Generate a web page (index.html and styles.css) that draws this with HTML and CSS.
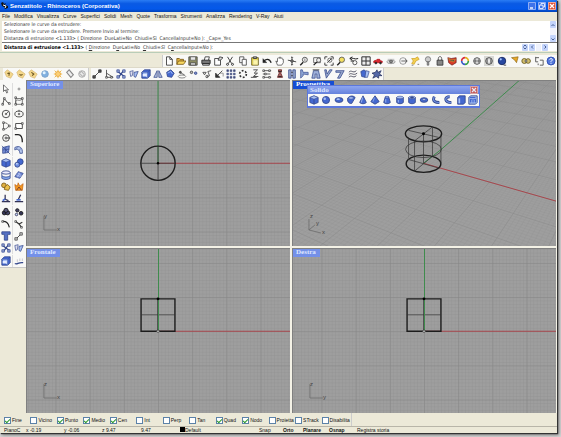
FILE: index.html
```html
<!DOCTYPE html>
<html lang="it">
<head>
<meta charset="utf-8">
<title>Senzatitolo - Rhinoceros (Corporativa)</title>
<link rel="stylesheet" href="styles.css">
</head>
<body>
<div class="window">
  <header class="titlebar">
    <svg class="app-icon" viewBox="0 0 8 8"><path d="M0 1L2 0L3 2L5 1L4 3L7 4L7 6L4 7L3 5L1 4Z" fill="#111"/><path d="M2 3L5 4L4 6" stroke="#fff" fill="none"/></svg>
    <h1>Senzatitolo - Rhinoceros (Corporativa)</h1>
    <div class="caption">
      <button aria-label="Riduci"><svg viewBox="0 0 8 8"><path d="M2 6H5" stroke="#fff" stroke-width="1.4"/></svg></button>
      <button aria-label="Ripristina"><svg viewBox="0 0 8 8"><path d="M3 3V1.500H6.500V5H5M1.500 3.200H5V6.500H1.500Z" stroke="#fff" stroke-width=".8" fill="none"/></svg></button>
      <button class="close" aria-label="Chiudi"><svg viewBox="0 0 8 8"><path d="M2 2L6 6M6 2L2 6" stroke="#fff" stroke-width="1.300"/></svg></button>
    </div>
  </header>
  <nav class="menu">
    <a href="#">File</a><a href="#">Modifica</a><a href="#">Visualizza</a><a href="#">Curve</a><a href="#">Superfici</a><a href="#">Solidi</a><a href="#">Mesh</a><a href="#">Quote</a><a href="#">Trasforma</a><a href="#">Strumenti</a><a href="#">Analizza</a><a href="#">Rendering</a><a href="#">V-Ray</a><a href="#">Aiuti</a>
  </nav>
  <section class="command">
    <div class="history">
      <div class="lines">
        <p>Selezionare le curve da estrudere:</p>
        <p>Selezionare le curve da estrudere. Premere Invio al termine:</p>
        <p>Distanza di estrusione &lt;1.133&gt; ( Direzione&nbsp; DueLati=No&nbsp; Chiudi=Sì&nbsp; CancellaInput=No ): _Cap=_Yes</p>
      </div>
      <div class="scroll">
        <button aria-label="Su"><svg viewBox="0 0 6 6"><path d="M1.500 4L3 2.500L4.500 4"/></svg></button>
        <button aria-label="Giù"><svg viewBox="0 0 6 6"><path d="M1.500 2.500L3 4L4.500 2.500"/></svg></button>
      </div>
    </div>
    <div class="prompt">
      <label for="cmd"><b>Distanza di estrusione &lt;1.133&gt;</b> ( <u>D</u>irezione&nbsp; D<u>u</u>eLati=<i>No</i>&nbsp; <u>C</u>hiudi=<i>Sì</i>&nbsp; C<u>a</u>ncellaInput=<i>No</i> ):</label>
      <input id="cmd" type="text">
      <div class="spin">
        <button aria-label="Cronologia"><svg viewBox="0 0 6 6"><path d="M1.500 2.500L3 1L4.500 2.500M1.500 3.500L3 5L4.500 3.500"/></svg></button>
        <button aria-label="Sinistra"><svg viewBox="0 0 6 6"><path d="M4 1.500L2.500 3L4 4.500"/></svg></button>
        <span></span>
        <button aria-label="Destra"><svg viewBox="0 0 6 6"><path d="M2.500 1.500L4 3L2.500 4.500"/></svg></button>
      </div>
    </div>
  </section>
  <div class="band band-main">
    <div class="tools standard" data-icons="new open save print props cut copy paste undo pan move3d zoom zoomwin zoomext zoomsel undoview grid4 car hide cplane points bulb lock render wheel sphereg sphereon sphereb spot gears dims help"></div>
  </div>
  <div class="band band-second">
    <div class="tools filters" data-icons="tagA tagB tagC ball sun slot slotb"></div>
    <div class="tools transform" data-icons="link tri nodes flow cubeb mirror boxb orbit dots rotate arrow array polar twist cage bone frame shear taper bendl bendr waves wrap splat"></div>
  </div>
  <main class="work">
    <aside class="side">
      <div class="tools palette" data-icons="cursor point poly ctrl circle ellipse arc rect ellc fillet patch surf box spheres tube plane bool explode trim split group ungroup curve chain text scale nodes flow cubeb analyze"></div>
    </aside>
    <div class="views">
      <section class="view">
        <svg class="scene" viewBox="0 0 264 166" preserveAspectRatio="xMidYMid slice">
          <defs>
            <pattern id="minor" width="3.430" height="3.430" patternUnits="userSpaceOnUse" x="131.500" y="83"><path d="M0 0H3.430M0 0V3.430" stroke="#919191" stroke-width=".7" fill="none"/></pattern>
            <pattern id="major" width="34.300" height="34.300" patternUnits="userSpaceOnUse" x="131.500" y="83"><path d="M0 0H34.300M0 0V34.300" stroke="#858585" stroke-width="1" fill="none"/></pattern>
          </defs>
          <path d="M0 0H264V166H0Z" fill="url(#minor)"/><path d="M0 0H264V166H0Z" fill="url(#major)"/>
          <path class="green" d="M131.500 0V83"/><path class="red" d="M131.500 83H264"/>
          <circle class="bold" cx="131.500" cy="83" r="17.200"/><path class="thin" d="M114 83H149M131.500 66V100"/><circle cx="131.500" cy="83" r="1.200"/>
          <g class="axis"><path d="M17 136V150H30"/><text x="17" y="138">y</text><text x="30" y="151">x</text></g>
        </svg>
        <h2>Superiore</h2>
      </section>
      <section class="view">
        <svg class="scene" viewBox="0 0 264 166" preserveAspectRatio="xMidYMid slice">
          <path id="floor-minor" class="floor"/><path id="floor-major" class="floor major"/>
          <path class="green" d="M131 83L149 69L227 0"/><path class="red" d="M131 83L264 121"/>
          <ellipse class="bold" cx="131" cy="53.500" rx="18.200" ry="8"/><ellipse class="thin" cx="131" cy="69" rx="18" ry="8.300"/><ellipse class="bold" cx="131" cy="83.500" rx="17.400" ry="8.700"/>
          <path class="thin" d="M116 50L146 57M122 60.500L140 46.500M131 53V83M116 57V78M122 60V91M140 47V76M148.500 54V83M115 79L147 88M122 91L140 76"/><circle cx="131" cy="53.500" r="1.500"/>
          <g class="axis"><path d="M16 139V150L28 153M16 150L22 145"/><text x="17" y="138">z</text><text x="23" y="145">y</text><text x="29" y="154">x</text></g>
        </svg>
        <h2 class="active">Prospettiva</h2>
      </section>
      <section class="view">
        <svg class="scene" viewBox="0 0 264 166" preserveAspectRatio="xMidYMid slice">
          <path d="M0 0H264V166H0Z" fill="url(#minor)"/><path d="M0 0H264V166H0Z" fill="url(#major)"/>
          <path class="red" d="M131.500 83H264"/>
          <path class="bold" d="M114.500 50.500H148.500V83H114.500Z"/><path class="thin" d="M114.500 66.500H148.500M131 50V83"/>
          <path class="green" d="M132 0V83"/><circle cx="131.500" cy="50.500" r="1.400"/><circle class="origin" cx="131.500" cy="83" r="1.200"/>
          <g class="axis"><path d="M17 136V150H30"/><text x="17" y="138">z</text><text x="30" y="151">x</text></g>
        </svg>
        <h2>Frontale</h2>
      </section>
      <section class="view">
        <svg class="scene" viewBox="0 0 264 166" preserveAspectRatio="xMidYMid slice">
          <path d="M0 0H264V166H0Z" fill="url(#minor)"/><path d="M0 0H264V166H0Z" fill="url(#major)"/>
          <path class="red" d="M131.500 83H264"/>
          <path class="bold" d="M114.500 50.500H148.500V83H114.500Z"/><path class="thin" d="M114.500 66.500H148.500M131 50V83"/>
          <path class="green" d="M132 0V83"/><circle cx="131.500" cy="50.500" r="1.400"/><circle class="origin" cx="131.500" cy="83" r="1.200"/>
          <g class="axis"><path d="M17 136V150H30"/><text x="17" y="138">z</text><text x="30" y="151">y</text></g>
        </svg>
        <h2>Destra</h2>
      </section>
      <div class="floating">
        <div class="floating-title"><span>Solido</span><button class="close" aria-label="Chiudi"><svg viewBox="0 0 8 8"><path d="M2 2L6 6M6 2L2 6" stroke="#fff" stroke-width="1.200"/></svg></button></div>
        <div class="tools" data-icons="box sphere ellipsoid parab cone pyramid conet cylinder tubes torus pipe pipeb extr text3d"></div>
      </div>
    </div>
  </main>
  <div class="osnap">
    <label><input type="checkbox" checked>Fine</label><label><input type="checkbox">Vicino</label><label><input type="checkbox" checked>Punto</label><label><input type="checkbox" checked>Medio</label><label><input type="checkbox" checked>Cen</label><label><input type="checkbox">Int</label><label><input type="checkbox">Perp</label><label><input type="checkbox">Tan</label><label><input type="checkbox" checked>Quad</label><label><input type="checkbox" checked>Nodo</label><label><input type="checkbox">Proietta</label><label><input type="checkbox">STrack</label><label><input type="checkbox">Disabilita</label>
  </div>
  <footer class="status">
    <span>PianoC</span><span>x -0.19</span><span>y -0.06</span><span>z 9.47</span><span>9.47</span><span class="layer">Default</span><span>Snap</span><b>Orto</b><b>Planare</b><b>Osnap</b><span>Registra storia</span>
  </footer>
</div>
<script src="app.js"></script>
</body>
</html>
```
FILE: styles.css
```css
* { box-sizing: border-box; margin: 0; padding: 0; }
body {
  min-height: 100vh;
  display: flex;
  padding: 0 4px 4px 0;
  background: #d4d4d4;
  font: 5px/7px "Liberation Sans", sans-serif;
  color: #111;
}
button { border: 0; background: none; display: block; min-width: 0; }
svg { display: block; }
a { color: inherit; text-decoration: none; }
.window {
  flex: 1;
  min-width: 0;
  display: flex;
  flex-direction: column;
  background: #ece9d8;
  box-shadow: 1px 1px 1px #333, 2px 2px 3px #777;
}
.titlebar {
  height: 12px;
  display: flex;
  align-items: center;
  gap: 1px;
  padding: 0 1px;
  background: linear-gradient(#2a7cf4, #0a5ae4 30%, #0458ea 75%, #0344b8);
  color: #fff;
}
.titlebar h1 { flex: 1; font-size: 6px; font-weight: bold; }
.app-icon { width: 8px; height: 8px; }
.caption { display: flex; gap: 2px; }
.caption button, .floating .close { width: 8px; height: 8px; border-radius: 1px; background: #3f73ea; box-shadow: inset 0 0 0 1px #8faef5; }
.caption .close, .floating .close { background: #dc5038; box-shadow: inset 0 0 0 1px #f0a898; }
.menu { height: 9px; display: flex; gap: 4px; padding: 0 2px; line-height: 8px; }
.command { background: #fff; border-left: 2px solid #ece9d8; font-family: "DejaVu Sans Condensed", "DejaVu Sans", sans-serif; }
.history { display: flex; height: 22px; justify-content: space-between; border-bottom: 1px solid #777; }
.lines { padding-left: 2px; color: #333; white-space: nowrap; }
.scroll { width: 6px; margin-right: 1px; display: flex; flex-direction: column; justify-content: space-between; background: #f2f3fb; }
.scroll button, .spin button { width: 6px; height: 7px; background: #c4d4fb; border-radius: 1px; }
.scroll path, .spin path { stroke: #465f94; stroke-width: 1; fill: none; }
.prompt { display: flex; height: 8px; align-items: center; }
.prompt label { padding-left: 2px; white-space: nowrap; color: #333; }
.prompt label b { color: #000; }
.prompt i { font-style: italic; }
.prompt input { flex: 1; min-width: 0; height: 7px; border: 0; font: inherit; outline: 0; }
.spin { display: flex; gap: 1px; padding-right: 9px; }
.spin span { width: 5px; background: #eef1fc; }
.band { display: flex; flex: none; }
.band-main { height: 15px; margin-top: 1px; padding-top: 2px; border-top: 1px solid #b9cdb8; justify-content: flex-end; }
.band-second { height: 13px; border-top: 1px solid #ddd9c8; }
.tools { display: grid; grid-auto-flow: column; grid-auto-columns: 1fr; background: #f9f9f7; }
.tools button { height: 12px; display: flex; justify-content: center; align-items: center; }
.tools svg { width: 10px; height: 10px; flex: none; }
.standard { width: 71%; border-left: 1px solid #ccc; }
.filters { width: 86px; margin-left: 3px; border-right: 1px solid #ccc; }
.transform { width: 293px; margin-left: 2px; border-right: 1px solid #ccc; }
.work { flex: 1; display: flex; min-height: 0; }
.side { width: 26px; flex: none; }
.palette { grid-auto-flow: row; grid-template-columns: 1fr 1fr; grid-auto-rows: 1fr; padding: 3px 1px 0 0; height: 188px; border-bottom: 1px solid #c8c8c8; }
.palette button:nth-child(odd) { border-right: 1px solid #ddd; }
.views {
  flex: 1;
  position: relative;
  display: grid;
  grid-template: 1fr 1fr / 1fr 1fr;
  gap: 2px;
  padding-right: 1px;
  background: #f4f2e6;
}
.view { position: relative; overflow: hidden; min-width: 0; min-height: 0; background: #9e9e9e; border: solid #808080; border-width: 1px 0 0 1px; }
.scene { position: absolute; inset: 0; width: 100%; height: 100%; }
.view h2 { position: absolute; top: 0; left: 0; padding: 0 4px 1px 3px; background: #7490e8; color: #dfe7ff; font: bold 7px/7px "Liberation Serif", serif; }
.view h2.active { background: #164ed4; color: #fff; }
.bold, .thin, .green, .red, .floor, .axis path { fill: none; }
.bold { stroke: #1c1c1c; stroke-width: 1.4px; }
.thin { stroke: #333; stroke-width: 0.7px; }
.green { stroke: #3e8b4c; stroke-width: 1px; }
.red { stroke: #a8464c; stroke-width: 1px; }
.origin { fill: #ddd; stroke: #222; stroke-width: 0.6px; }
.floor { stroke: #939393; stroke-width: 0.3px; }
.floor.major { stroke: #8c8c8c; stroke-width: 0.6px; }
.axis path { stroke: #6c6c6c; stroke-width: 0.8px; }
.axis text { fill: #444; font-size: 6px; }
.floating {
  position: absolute;
  top: 5px;
  left: 281px;
  width: 173px;
  border: solid #5c78dc;
  border-width: 1px 1px 2px;
  background: #f9f9f9;
}
.floating-title { height: 8px; display: flex; justify-content: space-between; align-items: center; padding: 0 1px 0 2px; background: linear-gradient(#8ea6f0, #6582dc); color: #dfe7ff; font: bold 7px/7px "Liberation Serif", serif; }
.floating .close { opacity: 0.8; }
.osnap { height: 13px; width: 352px; display: grid; grid-template-columns: repeat(13, 1fr); padding: 1px 3px 0 4px; border-right: 1px solid #ccc; }
.osnap label { display: flex; align-items: center; gap: 1px; white-space: nowrap; min-width: 0; }
.osnap input { appearance: none; flex: none; width: 7px; height: 7px; border: 1px solid #5c82a8; background: #fff; }
.osnap input:checked::after { content: ""; display: block; width: 4px; height: 2px; margin-top: 1px; border: solid #2c9a2c; border-width: 0 0 1px 1px; transform: rotate(-45deg); }
.status { height: 7px; display: grid; grid-template-columns: 22px 38px 38px 39px 39px 79px 24px 20px 26px 28px 1fr; padding-left: 4px; line-height: 6px; border-top: 1px solid #b8b5a8; white-space: nowrap; }
.layer::before { content: ""; display: inline-block; width: 5px; height: 5px; background: #000; vertical-align: top; }
```
FILE: app.js
```js
// Icon drawings on a 12 x 12 grid.
const p = (d, stroke = '#333', fill = 'none', w = 1) =>
  `<path d="${d}" stroke="${stroke}" fill="${fill}" stroke-width="${w}"/>`;
const c = (x, y, r, stroke = '#333', fill = 'none', w = 1) =>
  `<circle cx="${x}" cy="${y}" r="${r}" stroke="${stroke}" fill="${fill}" stroke-width="${w}"/>`;
const e = (x, y, rx, ry, stroke = '#333', fill = 'none', w = 1) =>
  `<ellipse cx="${x}" cy="${y}" rx="${rx}" ry="${ry}" stroke="${stroke}" fill="${fill}" stroke-width="${w}"/>`;
const navy = '#33478c', blue = '#4468d0', pale = '#a8c0f4', gold = '#e0b040', brown = '#7a5a18';
const tag = mark => p('M1 4L4 1L11 6L8 11L3 9Z', '#d4b470', '#f4d88c', .8) + p(mark, '#6a5420', 'none', 1.3);
const lens = 'M5 7.5L1.5 11';
const square = (x, y) => p(`M${x} ${y}h2v2h-2Z`, '#333', '#fff', .8);

const icons = {
  new: p('M3 1H7L10 4V11H3Z', '#333', '#fff') + p('M7 1V4H10'),
  open: p('M1 10V3H4L5 4H9V6', brown, gold) + p('M1 10L3 6H12L9 10Z', brown, '#f8d860'),
  save: p('M1 1H11V11H1Z', '#444', '#8c8c60') + p('M3 1H9V5H3Z', '#555', '#e8e8e8', .7) + p('M3 8H9V11H3Z', '#333', '#ccc', .7),
  print: p('M4 5L5 1H10L9 5', '#333', '#fff') + p('M1 5H11V9H1Z', '#222', '#777') + p('M2 9H10V11H2Z', '#222', '#ccc'),
  props: p('M2 3H9V11H2Z', '#333', '#fff') + p('M6 5L8 1L12 2L9 5Z', '#333', '#ddd'),
  cut: p('M3 1L8 9M9 1L4 9', '#222') + c(3, 10, 1.2, '#222') + c(9, 10, 1.2, '#222'),
  copy: p('M2 1H7V8H2Z', '#444', '#fff') + p('M5 4H10V11H5Z', '#444', '#fff'),
  paste: p('M2 2H10V11H2Z', '#665a20', '#f0dc50') + p('M4 1H8V3H4Z', '#333', '#bbb') + p('M4 5H9V10H4Z', '#ddb', '#fff7a8', .6),
  undo: p('M2 7C4 3 9 3 11 8', '#222', 'none', 1.6) + p('M1 3V8H6Z', '#222', '#222', .3),
  pan: p('M3 11L1 6L3 7V3L4 2L5 3L6 1L7 3L8 2L9 4L10 4V8L8 11Z', '#333', '#fff', .8),
  move3d: p('M6 1V11M1 5L11 7M5 2L6 1L7 2M5 10L6 11L7 10', '#333') + c(6, 6, 1.5, '#333', '#999'),
  zoom: c(7, 4.5, 3, '#444', '#eee') + p(lens, '#222', 'none', 1.6) + p('M7 3V6', '#777'),
  zoomwin: p('M2 2H10V8H2Z', '#555') + c(8, 5, 2.5, '#555', '#eee') + p('M6 7L2 11', '#222', 'none', 1.5),
  zoomext: p('M1 4V1H4M8 1H11V4M11 8V11H8M4 11H1V8M4 8L9 3', '#222') + c(7, 5, 2.5, '#555'),
  zoomsel: c(7, 4.5, 3.2, '#555', '#f4e060') + p(lens, '#222', 'none', 1.6),
  undoview: p('M1 3C4 1 7 5 11 3M2 6H6M1 3L4 1M1 3L4 5', '#222', 'none', 1.2) + c(7, 8, 2.5, '#444'),
  grid4: p('M1 1H11V11H1ZM6 1V11M1 6H11', '#333', '#eee', 1.2),
  car: p('M1 8V6L4 5L5 4H8L9 6L11 6V8Z', '#b81820', '#d82830') + c(3.5, 8.5, 1, '#222', '#222') + c(9, 8.5, 1, '#222', '#222'),
  hide: e(6, 7, 5, 2.2, '#999', '#ddd') + c(6, 6.5, 1.8, '#555', '#888') + p('M2 4L10 4', '#bbb'),
  cplane: c(6, 6, 4, '#777', '#f4f4f4', .8) + p('M4 6H11M9 4L11 6L9 8', '#555'),
  points: p('M2 3H6L9 1L11 4L7 6L5 10L2 9L4 6Z', '#c89c20', '#f4d050', .8) + p('M2 11H4M9 10H11', '#666'),
  bulb: c(6, 4, 3.2, '#777', '#ccc') + p('M5 7H7V11H5Z', '#555', '#999', .7),
  lock: p('M4 6V3C4 0 8 0 8 3V6', '#444') + p('M2.500 5H9.500V11H2.500Z', '#333', '#888'),
  render: p('M1 2L5 3L11 2V8L6 11L2 8Z', '#6a2020', '#d83c28', .8) + p('M2 3L6 5L10 4L8 7L4 6Z', '#e8b030', '#444', .6),
  wheel: p('M6 2A4 4 0 0 1 10 6', '#e4b020', 'none', 2) + p('M10 6A4 4 0 0 1 6 10', '#38a048', 'none', 2) + p('M6 10A4 4 0 0 1 2 6', '#3858c8', 'none', 2) + p('M2 6A4 4 0 0 1 6 2', '#d83040', 'none', 2),
  sphereg: c(6, 6, 4, '#555', '#bbb') + e(6, 6, 1.8, 4, '#555', '#e8e8e8', .6) + p('M2 6H10', '#555'),
  sphereon: p('M0 0H12V12H0Z', 'none', '#d8d8d4') + c(6, 6, 4, '#444', '#aaa') + e(6, 6, 1.800, 4, '#444', '#f0f0f0', .6),
  sphereb: c(6, 6, 4.5, '#14245c', '#2848a0') + c(4.5, 4, 1.3, 'none', '#a8c8ff') + p('M8 11H11', '#333'),
  spot: p('M3 2L11 1L9 8L7 5Z', '#8c6818', '#e8a828', .8),
  gears: c(4, 6, 3, '#685818', '#d4c070') + c(8.500, 6, 2.800, '#685818', '#d4c070') + c(6, 6, 1.200, '#444', '#fff'),
  dims: p('M2 1V7H5M2 2H6M7 5H11V11H7M5 9V11', '#555', 'none', 1.1),
  help: c(6, 6, 4.8, '#2848b0', '#5478dc') + p('M4.500 4.500C4.500 2.500 8 2.500 7.500 5L6 6.500V7.500M6 8.500V9.500', '#fff', 'none', 1.2),
  tagA: tag('M4 5L7 6M6 4V8'), tagB: tag('M4.500 6A1.500 1.500 0 1 0 7.500 6'), tagC: tag('M4 4L7 6L5 8'),
  ball: c(6, 6, 4, '#78a0c8', '#80b0e0') + c(5, 4.500, 1.800, 'none', '#e0f2ff'),
  sun: p('M6 1V11M1 6H11M2 2L10 10M10 2L2 10', '#f0bc50', 'none', 1.2) + c(6, 6, 3, '#e8a840', '#fcd078'),
  slot: p('M2 4L5 1L10 7L7 10Z', '#888', '#eee', 1.3),
  slotb: c(6, 6, 4, '#aaa', '#ddd') + p('M3 5L5 3L9 7L7 9Z', '#999', '#eee'),
  link: p('M3 9L9 3', '#333') + p('M1 8H4V11H1ZM8 1H11V4H8Z', '#222', '#555', .8),
  tri: p('M3 1V10H11L3 5', '#444') + square(2, 9) + square(8, 9),
  nodes: p('M2 3L10 9M3 10L9 2', navy, 'none', 1.5) + p('M1 1H4V4H1ZM8 1H11V4H8ZM1 8H4V11H1ZM8 8H11V11H8Z', navy, '#99a8d8', .8),
  flow: p('M1 3L5 2L4 8L2 9Z', navy, '#dde', .8) + p('M6 4L11 3L8 10L6 9Z', navy, pale, .9),
  cubeb: p('M1 4L4 1H11V8L8 11H1Z', navy, blue) + p('M1 4H8V11M8 4L11 1', navy, pale, .5) + p('M2 6H7V9H2Z', 'none', '#e4ecff'),
  mirror: p('M5 2L1 10H5ZM7 2L11 10H7Z', navy, '#b8c4e0', .9),
  boxb: p('M2 4L7 1L11 5L8 10L3 9Z', navy, blue) + p('M3 5L7 3L9 6', pale),
  orbit: e(6, 9, 4.500, 1.800, '#777') + c(4, 4, 1.200, '#333', '#666') + p('M5 5L9 7', '#555'),
  dots: c(3, 4, 1.5, '#444', '#bbb') + c(8, 5, 1.5, navy, '#8090c8'),
  rotate: p('M1 4H5L3 7ZM5 10L9 8L7 3L11 2', '#444', '#eee') + c(6, 9, 1.5, '#555'),
  arrow: p('M10 2L4 8M2 5V10H7Z', '#333', '#333') + p('M7 5H11V9', '#888'),
  array: p('M1 1H3V3H1ZM5 1H7V3H5ZM9 1H11V3H9ZM1 5H3V7H1ZM5 5H7V7H5ZM9 5H11V7H9ZM1 9H3V11H1ZM5 9H7V11H5ZM9 9H11V11H9Z', navy, '#556', .7),
  polar: `<circle cx="6" cy="6" r="4" fill="none" stroke="#333" stroke-width="2" stroke-dasharray="2.200 2"/>`,
  twist: p('M4 1H9L5 5H9L4 9H10M1 10H8', '#555', 'none', 1.2),
  cage: p('M1 2H11M1 6H10M2 10H11', '#444') + square(1, 1) + square(8, 1) + square(3, 5) + square(8, 9) + square(1, 9),
  bone: p('M4 1H8L7 5L9 10H3L5 5Z', '#622', '#a66') + p('M4 3H8M4 9H8', '#222'),
  frame: p('M2 1H5V11H2ZM7 1H10V11H7Z', navy, '#99a8cc', .9) + p('M5 4H7M5 8H7', '#333'),
  shear: p('M2 1V11L5 8V6L11 7V4L5 4L4 1Z', navy, '#8fa6d4', .8),
  taper: p('M3 2H9L11 11H7V6H5V11H1Z', navy, '#9fb0d8', .9) + p('M2 1H10'),
  bendl: p('M2 1L4 11L11 1H8L5 6L4 1Z', navy, '#98a8cc', .9),
  bendr: p('M1 2H11L6 11H3L7 4H1Z', navy, '#98a8cc', .9),
  waves: p('M1 4C4 0 6 6 10 2M1 7C4 3 6 9 11 5M1 10C4 6 6 12 10 8', '#556', 'none', 1.2),
  wrap: p('M1 3L5 1L8 4L6 10L2 9Z', navy, blue, .9) + p('M7 2L11 3L9 10L6 10Z', navy, pale, .8),
  splat: p('M6 1L7 4L11 2L9 6L12 8L8 8L8 11L5 9L1 11L3 7L0 5L4 4Z', '#1c2858', '#5468a8', .8),
  cursor: p('M3 1V9L5 7L7 11L8 10L6.500 7H9Z', '#333', '#fff', .8),
  point: p('M5 5H7V7H5Z', '#666', '#eee', .7),
  poly: p('M2 10L4 3L8 8L11 9') + square(1, 9) + square(3, 2) + square(9, 8),
  ctrl: p('M2 9C2 0 6 9 10 3M2 3H10V10H2Z', '#444', 'none', .8) + square(1, 1) + square(9, 2) + square(1, 9) + square(9, 9),
  circle: c(6, 6, 4.500) + c(6, 6, 1, '#333', '#777', .6) + p('M6 6L9 3', '#555'),
  ellipse: e(6, 6, 5, 3.500) + c(6, 6, 1, '#333', '#777', .600) + p('M6 1V3'),
  arc: p('M3 2C11 2 11 9 3 10M3 10L3 2', '#333', 'none', .8) + square(2, 1) + square(2, 9) + square(9, 5),
  rect: p('M2 3H10V9H2Z', '#333', '#fff') + square(1, 8) + square(9, 2),
  ellc: c(6, 6, 4) + p('M5 6H11', '#333') + square(5, 5),
  fillet: p('M1 2H5C9 2 10 5 10 11', '#222', 'none', 1.5),
  patch: p('M2 3L10 1L9 9L2 10Z', navy, '#7890d8', .9) + p('M1 1L11 11M6 2L5 10M2 6L10 5', navy, 'none', .8),
  surf: p('M1 3C6 0 11 3 10 10L7 10C7 6 4 4 1 6Z', navy, '#b4c6ec', .9) + p('M4 2L3 5M8 4L6 7', navy, 'none', .6),
  box: p('M1 3L6 1L11 3V9L6 11L1 9Z', navy, blue, .9) + p('M1 3L6 5L11 3L6 1Z', navy, pale, .6) + p('M6 5V11', navy),
  spheres: c(7.500, 4.500, 3.500, navy, blue) + c(4, 8, 3, navy, '#6c8ce0') + c(3.500, 7, 1, 'none', '#dce8ff'),
  tube: e(6, 3, 5, 2, navy, '#eef') + p('M1 7V10C4 12 8 12 11 10V7C8 9 4 9 1 7Z', navy, '#84a8ec', .9) + p('M1 3V7M11 3V7', navy),
  plane: p('M1 8L5 2L11 4L7 10Z', navy, '#7088d4', .9) + p('M4 3L9 7M3 6L8 8M7 3L4 9', '#dce4ff', 'none', .6),
  bool: c(3.500, 4, 2.800, brown, gold) + p('M5 5L8 3L11 6L9 10L4 9Z', brown, '#ecc048'),
  explode: p('M1 3L4 5L5 1L7 5L11 2L10 10H2Z', '#c06010', '#f49820', .8) + p('M3 10L6 6L9 10', '#633'),
  trim: p('M5 1V6M1 9H11M4 6L9 8', '#335', 'none', 1.5) + p('M5 6L2 8', blue, 'none', 2),
  split: p('M8 1L5 7M1 9H11', '#335', 'none', 1.5) + p('M3 7H8', blue, 'none', 2),
  group: c(4, 7, 2.500, '#111', '#335') + c(8, 7, 2.500, '#111', '#446') + c(6, 4, 2.500, '#111', '#557'),
  ungroup: c(4, 4, 2, '#111', '#446') + c(8.500, 7.500, 2.200, '#111', '#335') + c(3, 9, 1.500, '#335', '#cdf'),
  curve: p('M1 3C6 2 9 5 10 10', '#222', 'none', 1.4) + square(1, 2),
  chain: p('M2 3L6 6L9 10M6 6L10 4', '#333', 'none', 1.4) + square(1, 2) + square(8, 9),
  text: p('M1 1H11V4H8V11H4V4H1Z', navy, '#5470c4'),
  scale: p('M3 9L8 4', '#333') + p('M1 8H4V11H1ZM7 2H10V5H7Z', '#333', '#ccc', .8),
  analyze: p('M1 9C4 11 5 7 11 8', navy, 'none', 1.5) + p('M4 4V7M7 3V6M10 3V6', '#99a', 'none', .6),
  sphere: c(6, 6, 4.300, navy, blue) + c(4.500, 4.500, 1.500, 'none', pale),
  ellipsoid: e(6, 6, 4.800, 2.900, navy, blue) + e(5, 5, 2, 1, 'none', pale),
  parab: p('M2 4C1 9 5 11 7 10L11 3C8 0 4 1 2 4Z', navy, blue) + e(6, 3.500, 3, 1.500, navy, pale, .6),
  cone: p('M6 1L10 9C8 11 4 11 2 9Z', navy, blue) + p('M5.500 3L4 9', pale),
  pyramid: p('M6 1L11 8L6 11L1 8Z', navy, blue) + p('M5.500 3L3.500 8', pale, 'none', .8),
  conet: p('M4 2H8L10 9C8 11 4 11 2 9Z', navy, blue) + e(6, 2.500, 2, 1, navy, pale, .500) + p('M4.500 5V9', pale),
  cylinder: p('M2 3V9C4 11 8 11 10 9V3Z', navy, blue) + e(6, 3, 4, 1.600, navy, pale, .7) + p('M4 6V9', pale),
  tubes: p('M2 3V9C4 11 8 11 10 9V3Z', navy, blue) + e(6, 3, 4, 1.600, navy, pale, .7) + e(6, 3, 1.800, .700, navy, navy),
  torus: e(6, 6, 4.600, 2.800, navy, blue) + e(6, 5.500, 1.900, .900, navy, '#eef', .600),
  pipe: p('M4 2C1 8 6 9 10 9', navy, 'none', 3.500) + p('M4 2C1 8 6 9 10 9', '#708ee0', 'none', 1.500),
  pipeb: p('M8 2C1 2 2 9 10 9', navy, 'none', 3.500) + p('M8 2C1 2 2 9 10 9', '#708ee0', 'none', 1.500),
  extr: p('M2 3L4 1H11V9L9 11H2Z', navy, blue) + p('M3 4H5V10H3Z', 'none', pale),
  text3d: p('M1 3L3 1H11V9L9 11H1Z', navy, pale) + p('M3 9V5H5V9M7 9V5H9V9M2 3H9', blue, 'none', 1.300)
};

document.querySelectorAll('[data-icons]').forEach(bar => {
  bar.innerHTML = bar.dataset.icons.split(' ').map(name =>
    `<button type="button" aria-label="${name}"><svg viewBox="0 0 12 12">${icons[name]}</svg></button>`).join('');
});

// Construction plane in two-point perspective around the scene origin.
const origin = [131, 83], vx = [-610, -129], vy = [396, -129];
const weight = (x, y) => 1 - .0041 * x + .0069 * y;
function project(x, y) {
  const w = weight(x, y);
  return [0, 1].map(i => ((origin[i] - .0041 * x * vx[i] + .0069 * y * vy[i]) / w).toFixed(1)).join(' ');
}
function floorLines(step, skip) {
  let d = '';
  for (let n = -120; n <= 120; n += step) {
    if (skip && n % skip === 0) continue;
    const yStart = Math.max(-120, (.15 - 1 + .0041 * n) / .0069);
    const xEnd = Math.min(120, (1 + .0069 * n - .15) / .0041);
    d += `M${project(n, yStart)}L${project(n, 120)}`;
    if (xEnd > -120) d += `M${project(-120, n)}L${project(xEnd, n)}`;
  }
  return d;
}
document.getElementById('floor-minor').setAttribute('d', floorLines(1, 10));
document.getElementById('floor-major').setAttribute('d', floorLines(10));
```
